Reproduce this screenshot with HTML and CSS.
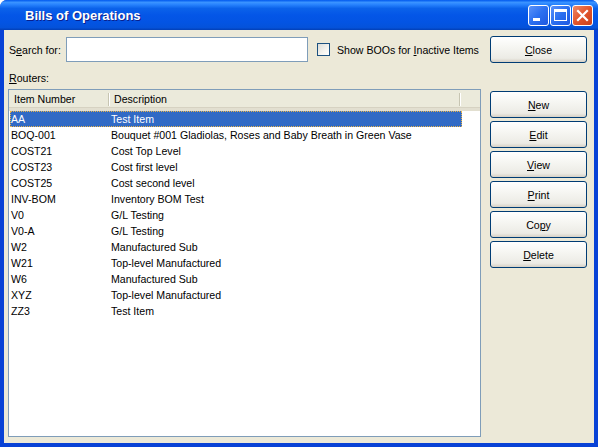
FILE: index.html
```html
<!DOCTYPE html>
<html>
<head>
<meta charset="utf-8">
<link rel="stylesheet" href="styles.css">
</head>
<body>
<div class="window">
  <div class="titlebar">
    <span class="title">Bills of Operations</span>
    <div class="tbtns">
      <div class="tbtn"><svg width="21" height="21" viewBox="0 0 21 21"><rect x="5" y="13" width="7" height="3" fill="#fff"/></svg></div>
      <div class="tbtn"><svg width="21" height="21" viewBox="0 0 21 21"><rect x="4.5" y="4.5" width="12" height="11" fill="none" stroke="#fff" stroke-width="1"/><rect x="4" y="4" width="13" height="3" fill="#fff"/></svg></div>
      <div class="tbtn close"><svg width="21" height="21" viewBox="0 0 21 21"><path d="M6 6 L15 15 M15 6 L6 15" stroke="#fff" stroke-width="2.2" stroke-linecap="square"/></svg></div>
    </div>
  </div>
  <div class="body">
    <div class="left">
      <div class="searchrow">
        <span class="lbl slbl">S<u>e</u>arch for:</span>
        <div class="input"></div>
        <div class="check"></div>
        <span class="lbl">Show BOOs for <u>I</u>nactive Items</span>
      </div>
      <div class="routers"><u>R</u>outers:</div>
      <div class="list">
        <div class="header">
          <div class="hcol c1">Item Number</div>
          <div class="hcol c2">Description</div>
        </div>
        <div class="row sel"><div class="c1">AA</div><div class="c2">Test Item</div></div>
        <div class="row"><div class="c1">BOQ-001</div><div class="c2">Bouquet #001 Gladiolas, Roses and Baby Breath in Green Vase</div></div>
        <div class="row"><div class="c1">COST21</div><div class="c2">Cost Top Level</div></div>
        <div class="row"><div class="c1">COST23</div><div class="c2">Cost first level</div></div>
        <div class="row"><div class="c1">COST25</div><div class="c2">Cost second level</div></div>
        <div class="row"><div class="c1">INV-BOM</div><div class="c2">Inventory BOM Test</div></div>
        <div class="row"><div class="c1">V0</div><div class="c2">G/L Testing</div></div>
        <div class="row"><div class="c1">V0-A</div><div class="c2">G/L Testing</div></div>
        <div class="row"><div class="c1">W2</div><div class="c2">Manufactured Sub</div></div>
        <div class="row"><div class="c1">W21</div><div class="c2">Top-level Manufactured</div></div>
        <div class="row"><div class="c1">W6</div><div class="c2">Manufactured Sub</div></div>
        <div class="row"><div class="c1">XYZ</div><div class="c2">Top-level Manufactured</div></div>
        <div class="row"><div class="c1">ZZ3</div><div class="c2">Test Item</div></div>
      </div>
    </div>
    <div class="right">
      <div class="btn"><u>C</u>lose</div>
      <div class="btngroup">
        <div class="btn"><u>N</u>ew</div>
        <div class="btn"><u>E</u>dit</div>
        <div class="btn"><u>V</u>iew</div>
        <div class="btn"><u>P</u>rint</div>
        <div class="btn">Co<u>p</u>y</div>
        <div class="btn"><u>D</u>elete</div>
      </div>
    </div>
  </div>
</div>
</body>
</html>
```
FILE: styles.css
```css
* { box-sizing: border-box; }
html, body { margin: 0; padding: 0; }
body {
  width: 598px; height: 447px; overflow: hidden;
  font-family: "Liberation Sans", Arial, sans-serif;
  font-size: 10.6px; color: #000;
}
.window {
  width: 598px; height: 447px;
  display: flex; flex-direction: column;
  background: #0842d6;
  border-radius: 7px 7px 0 0;
  overflow: hidden;
}
.titlebar {
  height: 30px; flex: none;
  display: flex; align-items: center; justify-content: space-between;
  padding: 0 5px 0 25px;
  background: linear-gradient(to bottom, #0058ee 0%, #3a93ff 8%, #2b86ff 14%, #0b62ea 28%, #0456e7 50%, #0354e3 75%, #0452da 92%, #023fb6 100%);
}
.title {
  color: #fff; font-weight: bold; font-size: 13px;
  font-family: "Liberation Sans", Arial, sans-serif;
  text-shadow: 1px 1px 0 #0a1f8c;
}
.tbtns { display: flex; gap: 1px; margin-top: 1px; }
.tbtn {
  width: 21px; height: 21px;
  border: 1px solid #fff; border-radius: 3px;
  background: linear-gradient(135deg, #5b93f9 0%, #2b6ff0 50%, #1e58e0 100%);
  display: flex; align-items: center; justify-content: center;
  overflow: hidden;
}
.tbtn svg { display: block; flex: none; }
.tbtn.close { background: linear-gradient(135deg, #ee8a6a 0%, #e2552c 50%, #c8401c 100%); }
.body {
  flex: 1;
  margin: 0 4px 4px 4px;
  background: #ece9d8;
  display: flex;
  padding: 6px 7px 6px 4px;
  gap: 9px;
}
.left { width: 473px; flex: none; min-width: 0; display: flex; flex-direction: column; }
.searchrow { height: 27px; display: flex; align-items: center; padding-left: 1px; }
.lbl { white-space: nowrap; }
.slbl { width: 57px; }
.input {
  width: 242px; height: 25px;
  border: 1px solid #7f9db9; background: #fff;
}
.check {
  width: 13px; height: 13px; margin: 0 7px 0 9px;
  border: 1px solid #1c5180;
  background: linear-gradient(135deg, #dcdcd7 0%, #f5f4ef 60%, #ffffff 100%);
}
.routers { margin: 9px 0 5px 1px; line-height: 12px; }
.list {
  flex: 1; border: 1px solid #7f9db9; background: #fff;
  display: flex; flex-direction: column;
}
.header {
  height: 21px; display: flex; align-items: center;
  background: #ebeadb;
  border-bottom: 3px solid #e2dfd0;
  box-shadow: inset 0 -1px 0 #d6d2c2;
}
.hcol { position: relative; height: 18px; display: flex; align-items: center; }
.hcol.c1 { width: 100px; padding-left: 5px; }
.hcol.c2 { width: 351px; padding-left: 5px; }
.hcol::after {
  content: ""; position: absolute; right: 0; top: 3px; width: 1px; height: 13px;
  background: #c7c5b2; box-shadow: 1px 0 0 #fff;
}
.row { height: 16px; display: flex; align-items: center; white-space: nowrap; }
.row .c1 { width: 101px; padding-left: 2px; }
.row .c2 { width: 351px; padding-left: 1px; }
.row.sel {
  width: 452px; margin-left: 1px;
  background: #316ac5; color: #fff;
  outline: 1px dotted #e8b34a; outline-offset: -1px;
}
.row.sel .c1 { width: 100px; padding-left: 1px; }
.right { width: 97px; flex: none; display: flex; flex-direction: column; }
.btngroup { margin-top: 28px; display: flex; flex-direction: column; gap: 3px; }
.btn {
  height: 27px; display: flex; align-items: center; justify-content: center;
  border: 1px solid #003c74; border-radius: 3px;
  background: linear-gradient(to bottom, #ffffff 0%, #f6f6f2 40%, #ecebe5 85%, #d6d0c5 100%);
}
```
